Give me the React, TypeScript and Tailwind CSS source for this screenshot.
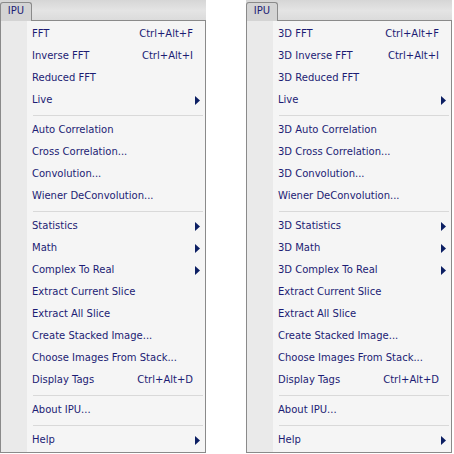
import React from "react";

type Item =
  | { sep: true }
  | { sep?: false; label: string; shortcut?: string; sub?: boolean };

const left: Item[] = [
  { label: "FFT", shortcut: "Ctrl+Alt+F" },
  { label: "Inverse FFT", shortcut: "Ctrl+Alt+I" },
  { label: "Reduced FFT" },
  { label: "Live", sub: true },
  { sep: true },
  { label: "Auto Correlation" },
  { label: "Cross Correlation..." },
  { label: "Convolution..." },
  { label: "Wiener DeConvolution..." },
  { sep: true },
  { label: "Statistics", sub: true },
  { label: "Math", sub: true },
  { label: "Complex To Real", sub: true },
  { label: "Extract Current Slice" },
  { label: "Extract All Slice" },
  { label: "Create Stacked Image..." },
  { label: "Choose Images From Stack..." },
  { label: "Display Tags", shortcut: "Ctrl+Alt+D" },
  { sep: true },
  { label: "About IPU..." },
  { sep: true },
  { label: "Help", sub: true },
];

const right: Item[] = [
  { label: "3D FFT", shortcut: "Ctrl+Alt+F" },
  { label: "3D Inverse FFT", shortcut: "Ctrl+Alt+I" },
  { label: "3D Reduced FFT" },
  { label: "Live", sub: true },
  { sep: true },
  { label: "3D Auto Correlation" },
  { label: "3D Cross Correlation..." },
  { label: "3D Convolution..." },
  { label: "Wiener DeConvolution..." },
  { sep: true },
  { label: "3D Statistics", sub: true },
  { label: "3D Math", sub: true },
  { label: "3D Complex To Real", sub: true },
  { label: "Extract Current Slice" },
  { label: "Extract All Slice" },
  { label: "Create Stacked Image..." },
  { label: "Choose Images From Stack..." },
  { label: "Display Tags", shortcut: "Ctrl+Alt+D" },
  { sep: true },
  { label: "About IPU..." },
  { sep: true },
  { label: "Help", sub: true },
];

function Arrow() {
  return (
    <svg width="5" height="9" viewBox="0 0 5 9" className="block">
      <polygon points="0,0 5,4.5 0,9" fill="#0c1f63" />
    </svg>
  );
}

function Menu({ items }: { items: Item[] }) {
  return (
    <div className="w-[206px] flex flex-col">
      <div className="h-[21px] flex items-end bg-[linear-gradient(to_bottom,#d6d6d6,#e4e4e4_50%,#dadada)]">
        <div className="w-[32px] h-[19px] border border-b-0 border-[#8a8a8a] rounded-t-[3px] bg-[#d4d4d4] flex items-start justify-center pt-[3px] text-[#1c1c74]">
          IPU
        </div>
        <div className="flex-1 h-full border-b border-[#8a8a8a]" />
      </div>
      <div className="flex border-x border-b border-[#8a8a8a] bg-[#f5f5f5]">
        <div className="w-[26px] bg-[#eaeaea]" />
        <div className="flex-1 flex flex-col pt-[2px] pb-[1px]">
          {items.map((it, i) =>
            it.sep ? (
              <div key={i} className="h-[8px] flex items-center ml-[6px] mr-[2px]">
                <div className="h-px w-full bg-[#d9d9d9]" />
              </div>
            ) : (
              <div key={i} className="h-[22px] flex items-center pl-[5px] pr-[5px] text-[#1c1c74]">
                <span className="flex-1 whitespace-nowrap">{it.label}</span>
                {it.shortcut && <span className="whitespace-nowrap">{it.shortcut}</span>}
                <span className="w-[7px] flex justify-end">{it.sub && <Arrow />}</span>
              </div>
            )
          )}
        </div>
      </div>
    </div>
  );
}

export default function App() {
  return (
    <div className="w-[454px] h-[454px] bg-white flex gap-[40px] text-[10px] leading-none [font-family:'DejaVu_Sans',sans-serif]">
      <Menu items={left} />
      <Menu items={right} />
    </div>
  );
}
